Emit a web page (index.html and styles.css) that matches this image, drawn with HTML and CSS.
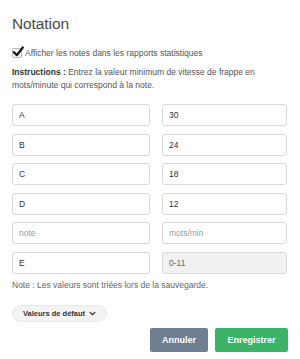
FILE: index.html
```html
<!DOCTYPE html>
<html lang="fr">
<head>
<meta charset="utf-8">
<link rel="stylesheet" href="styles.css">
</head>
<body>
<div class="modal">
  <h1 class="title">Notation</h1>
  <label class="check-row">
    <span class="check">
      <svg viewBox="0 0 12 12" width="12" height="12"><path d="M2 6.2 L4.8 9.2 L10.8 1.5" fill="none" stroke="#111" stroke-width="2.2" stroke-linecap="round" stroke-linejoin="round"/></svg>
    </span>
    <span>Afficher les notes dans les rapports statistiques</span>
  </label>
  <p class="instructions"><b>Instructions :</b> Entrez la valeur minimum de vitesse de frappe en mots/minute qui correspond à la note.</p>
  <div class="grid">
    <input class="field" value="A"><input class="field" value="30">
    <input class="field" value="B"><input class="field" value="24">
    <input class="field" value="C"><input class="field" value="18">
    <input class="field" value="D"><input class="field" value="12">
    <input class="field" placeholder="note"><input class="field" placeholder="mots/min">
    <input class="field" value="E"><input class="field disabled" value="0-11" disabled>
  </div>
  <p class="note">Note : Les valeurs sont triées lors de la sauvegarde.</p>
  <button class="pill">Valeurs de défaut
    <svg class="chev" viewBox="0 0 10 6" width="7" height="5"><path d="M1 1 L5 4.5 L9 1" fill="none" stroke="#333" stroke-width="1.8"/></svg>
  </button>
  <div class="actions">
    <button class="btn cancel">Annuler</button>
    <button class="btn save">Enregistrer</button>
  </div>
</div>
</body>
</html>
```
FILE: styles.css
```css
html, body { margin: 0; padding: 0; background: #fff; }
body { font-family: "Liberation Sans", Arial, sans-serif; color: #555; }
.modal { padding: 13px 12px 12px 12px; width: 276px; }
.title { font-size: 15.5px; font-weight: normal; color: #4a4a4a; margin: 0 0 12px 0; line-height: 22px; letter-spacing: -0.1px; }
.check-row { display: flex; align-items: center; gap: 3px; font-size: 8.5px; color: #555; height: 12px; margin-bottom: 7px; }
.check { position: relative; box-sizing: border-box; width: 10px; height: 10px; border: 1px solid #b5b5b5; border-radius: 2px; background: #fff; flex: none; }
.check svg { position: absolute; left: -1px; top: -3px; }
.instructions { margin: 0 0 12px 0; font-size: 8.5px; line-height: 13px; color: #555; }
.instructions b { color: #333; }
.grid { display: grid; grid-template-columns: 138px 125px; column-gap: 12px; row-gap: 7.5px; }
.field { box-sizing: border-box; height: 22px; border: 1px solid #d9d9d9; border-radius: 3px; padding: 0 6px; font-family: "Liberation Sans", Arial, sans-serif; font-size: 8.5px; color: #333; background: #fff; width: 100%; }
.field::placeholder { color: #999; }
.field.disabled { background: #f1f1f1; color: #666; }
.note { margin: 6px 0 11px 0; font-size: 8.5px; line-height: 11px; color: #666; }
.pill { display: inline-flex; align-items: center; gap: 4px; height: 17px; padding: 0 10px; border: 1px solid #eaeaea; border-radius: 9px; background: #f3f3f3; font-family: "Liberation Sans", Arial, sans-serif; font-size: 7.5px; font-weight: bold; color: #333; }
.actions { display: flex; justify-content: flex-end; gap: 7px; margin-top: 6px; }
.btn { height: 24px; border: 0; border-radius: 2px; color: #fff; font-family: "Liberation Sans", Arial, sans-serif; font-size: 9px; font-weight: bold; padding: 0 10px; }
.cancel { background: #6f7f91; width: 58px; }
.save { background: #3cb468; width: 73px; }
```
